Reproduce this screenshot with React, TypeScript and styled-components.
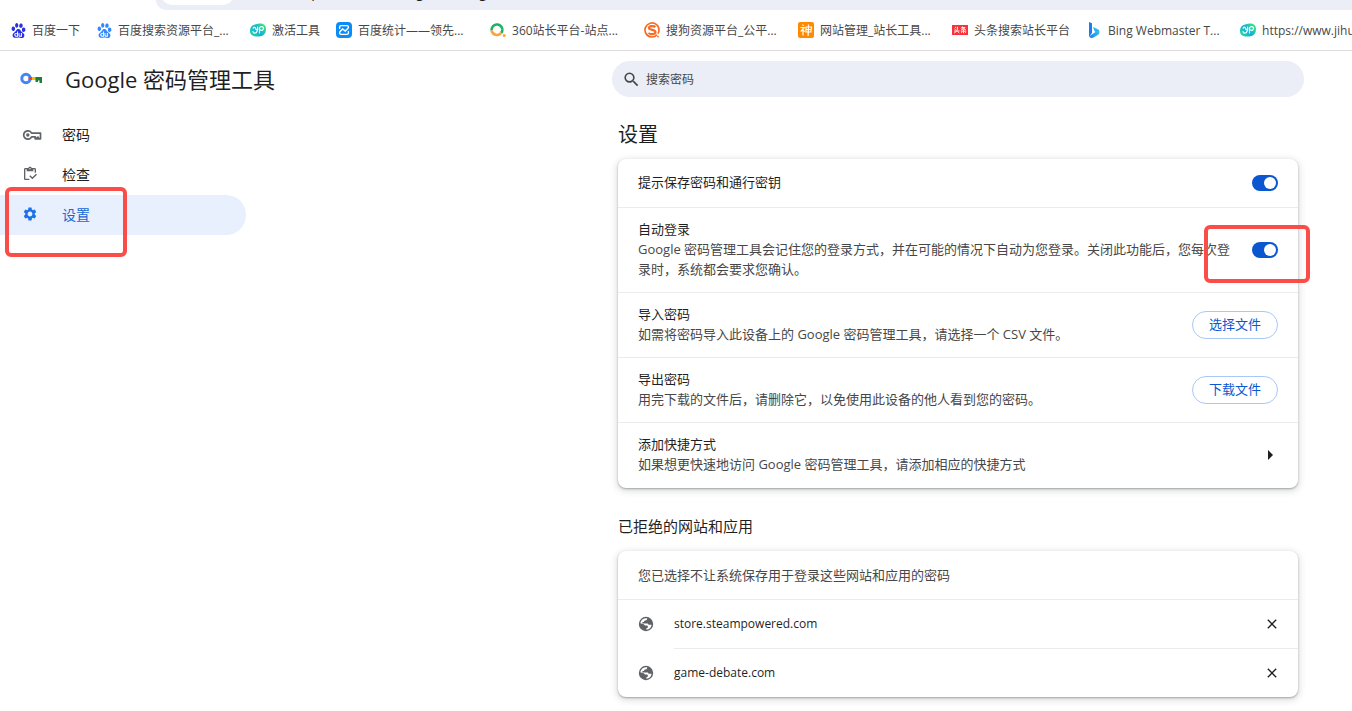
import React from "react";
import styled, { createGlobalStyle, css } from "styled-components";
import { SiBaidu } from "react-icons/si";
import { MdSearch, MdSettings, MdOutlineInventory, MdClose, MdArrowRight } from "react-icons/md";

const GlobalStyle = createGlobalStyle`
  *, *::before, *::after { box-sizing: border-box; }
  body {
    margin: 0;
    background: #fff;
    color: #1f1f1f;
    font-family: "Open Sans", "Noto Sans CJK SC", sans-serif;
    font-size: 13px;
    line-height: 20px;
  }
  button, input { font: inherit; }
  h1, h2, p, ul { margin: 0; padding: 0; }
  ul { list-style: none; }
  svg { display: block; flex: none; }
`;

const Page = styled.div`
  min-height: 100vh;
  overflow-x: hidden;
`;

const AddressStrip = styled.div`
  display: flex;
  align-items: flex-end;
  height: 10px;
  margin-left: 156px;
  padding: 0 0 5px 4px;
  overflow: hidden;
  background: #ebeef7;
  border-bottom-left-radius: 14px;
`;

const SiteChip = styled.button`
  flex: none;
  width: 75px;
  height: 26px;
  border: 0;
  border-radius: 13px;
  background: #fff;
`;

const AddressInput = styled.input`
  flex: 1;
  min-width: 0;
  height: 20px;
  margin-bottom: 3px;
  padding: 0 0 0 12px;
  border: 0;
  background: transparent;
  color: #1f1f1f;
  font-size: 14px;
  line-height: 20px;
`;

const BookmarkBar = styled.nav`
  display: flex;
  align-items: center;
  gap: 16px;
  height: 41px;
  padding-left: 10px;
  border-bottom: 1px solid #dcdcdc;
  overflow: hidden;
`;

const Bookmark = styled.a<{ $truncated?: boolean }>`
  display: flex;
  flex: none;
  align-items: center;
  gap: 6px;
  width: ${(p) => (p.$truncated ? "138px" : "auto")};
  color: #474747;
  font-size: 12px;
  text-decoration: none;
  white-space: nowrap;
`;

const BookmarkLabel = styled.span`
  padding-top: 2px;
`;

const Layout = styled.div`
  display: grid;
  grid-template-columns: minmax(246px, 564px) minmax(728px, 1fr);
`;

const Brand = styled.div`
  display: flex;
  align-items: center;
  gap: 22px;
  height: 56px;
  padding-left: 20px;
`;

const BrandTitle = styled.h1`
  font-size: 22px;
  font-weight: 400;
  line-height: 28px;
`;

const Menu = styled.ul`
  width: 246px;
  padding-top: 8px;
`;

const MenuItem = styled.li`
  position: relative;
`;

const MenuLink = styled.a<{ $active?: boolean }>`
  display: flex;
  align-items: center;
  height: 40px;
  padding-left: 22px;
  border-radius: 0 20px 20px 0;
  color: #1f1f1f;
  font-size: 14px;
  text-decoration: none;
  svg { color: #5f6368; }
  ${(p) =>
    p.$active &&
    css`
      background: #e8f0fe;
      color: #1967d2;
      svg { color: #1a73e8; }
    `}
`;

const MenuIcon = styled.span`
  width: 40px;
  padding-bottom: 2px;
`;

const Highlight = styled.span`
  position: absolute;
  z-index: 2;
  border: 4px solid #fa4d49;
  border-radius: 6px;
  pointer-events: none;
`;

const MenuHighlight = styled(Highlight)`
  top: -8px;
  left: 5px;
  width: 122px;
  height: 70px;
`;

const ToggleHighlight = styled(Highlight)`
  top: -17px;
  left: -48px;
  width: 106px;
  height: 58px;
`;

const Main = styled.main`
  padding: 10px 24px 14px;
`;

const SearchBox = styled.label`
  display: flex;
  align-items: center;
  gap: 5px;
  max-width: 692px;
  height: 36px;
  margin: 0 auto;
  padding: 0 10px;
  border-radius: 18px;
  background: #ebeef7;
  color: #474747;
`;

const SearchInput = styled.input`
  flex: 1;
  min-width: 0;
  padding: 2px 0 0;
  border: 0;
  outline: 0;
  background: transparent;
  color: #474747;
  font-size: 12px;
  &::placeholder { color: #474747; opacity: 1; }
`;

const Content = styled.div`
  max-width: 680px;
  margin: 0 auto;
`;

const PageHeading = styled.h2`
  padding: 24px 0 10px;
  font-size: 20px;
  font-weight: 400;
  line-height: 28px;
`;

const SectionHeading = styled.h2`
  padding: 28px 0 15px;
  font-size: 15px;
  font-weight: 400;
  line-height: 20px;
`;

const Card = styled.section`
  border-radius: 8px;
  background: #fff;
  box-shadow: 0 1px 2px rgba(60, 64, 67, 0.4), 0 2px 6px 2px rgba(60, 64, 67, 0.15);
`;

const Row = styled.div`
  display: flex;
  align-items: center;
  gap: 20px;
  min-height: 48px;
  padding: 11px 20px;
  & + & { border-top: 1px solid #ececec; }
  & + &:last-child { padding-bottom: 12px; }
`;

const RowText = styled.div`
  flex: 1;
  min-width: 0;
  padding-bottom: 2px;
`;

const Note = styled.p`
  color: #474747;
`;

const ToggleWrap = styled.span`
  position: relative;
  display: flex;
`;

const Toggle = styled.input`
  appearance: none;
  display: flex;
  align-items: center;
  width: 26px;
  height: 16px;
  margin: 0;
  padding: 2px;
  border-radius: 8px;
  background: #0b57d0;
  &::before {
    content: "";
    width: 12px;
    height: 12px;
    margin-left: auto;
    border-radius: 50%;
    background: #fff;
  }
  &:not(:checked) { background: #747775; }
  &:not(:checked)::before { margin-left: 0; }
`;

const PillButton = styled.button`
  width: 86px;
  height: 28px;
  padding: 0 0 2px;
  border: 1px solid #a8c7fa;
  border-radius: 14px;
  background: #fff;
  color: #0b57d0;
  line-height: 20px;
`;

const IconButton = styled.button`
  display: flex;
  align-items: center;
  justify-content: center;
  width: 16px;
  height: 24px;
  padding: 0;
  border: 0;
  background: none;
  color: #1f1f1f;
`;

const SiteList = styled.ul`
  border-top: 1px solid #ececec;
`;

const SiteItem = styled.li`
  display: flex;
  align-items: center;
  gap: 20px;
  padding-left: 20px;
  font-size: 12px;
`;

const SiteBody = styled.div`
  display: flex;
  flex: 1;
  align-items: center;
  justify-content: space-between;
  height: 48px;
  padding-right: 18px;
  ${SiteItem} + ${SiteItem} & {
    height: 49px;
    border-top: 1px solid #ececec;
  }
`;

const JihuoIcon = () => (
  <svg width="16" height="16" viewBox="0 0 16 16">
    <defs>
      <linearGradient id="jihuo" x1="0" y1="0.9" x2="1" y2="0.2">
        <stop offset="0" stopColor="#20dc98" />
        <stop offset="0.5" stopColor="#14b0dc" />
        <stop offset="1" stopColor="#3cec6c" />
      </linearGradient>
    </defs>
    <path d="M5 2.500C10 0.500 16 1 16 7s-3.500 7.500-9 7.500S0 12 0 8.500s2-5 5-6z" fill="url(#jihuo)" />
    <path d="M3.200 6.200c0-1.500 2-1.500 2.200 0S7 8.200 7.600 6.800V5M3 9.500c0 2.200 3.400 2.200 4 0L7.800 7M9.500 11V6.500c0-2.500 4-2.500 4 0 0 1.600-1.800 2.200-3 1.500" fill="none" stroke="#fff" strokeWidth="1.200" strokeLinecap="round" />
  </svg>
);

const TongjiIcon = () => (
  <svg width="16" height="16" viewBox="0 0 16 16">
    <rect width="16" height="16" rx="4" fill="#0b8cf5" />
    <path d="M3.600 7V5q0-1.400 1.400-1.400h6q1.400 0 1.400 1.400v1M12.400 9v2q0 1.400-1.400 1.400H5Q3.600 12.400 3.600 11v-1" fill="none" stroke="#fff" strokeWidth="1.300" />
    <path d="M3.600 10l3-3 2.600 2 3.200-3" fill="none" stroke="#fff" strokeWidth="1.500" />
  </svg>
);

const So360Icon = () => (
  <svg width="16" height="16" viewBox="0 0 16 16" fill="none" strokeWidth="2.600">
    <path d="M1.600 8.500a5.400 5.400 0 0 1 10.800-1.200" stroke="#19b366" />
    <path d="M12.400 7.300a5.400 5.400 0 0 1-1.200 3.600" stroke="#19b366" />
    <path d="M1.600 8.500A5.400 5.400 0 0 0 11.200 10.900" stroke="#fba33c" />
    <circle cx="14.200" cy="13.600" r="1.500" fill="#fba33c" />
  </svg>
);

const SogouIcon = () => (
  <svg width="16" height="16" viewBox="0 0 16 16" fill="none" stroke="#fb6a22">
    <path d="M13 12.900A7 7 0 1 1 15 8c0 1.500-.4 2.700-1 3.600" strokeWidth="1.700" />
    <path d="M11.500 5C9.500 3.600 5 3.800 5 6s6.500 1.500 6.500 4-5 2.700-7 1" strokeWidth="2.200" />
    <circle cx="14" cy="14.600" r="0.900" fill="#fb6a22" stroke="none" />
  </svg>
);

const ShenIcon = () => (
  <svg width="16" height="16" viewBox="0 0 16 16">
    <rect width="16" height="16" rx="2" fill="#ff8a00" />
    <g fill="none" stroke="#fff" strokeWidth="1.200">
      <path d="M4.500 2.500l1 1.300M2.500 5.500h3.800L2.700 9.500M5 7.500v6M5.500 8.500l1.200 1.200" />
      <path d="M8 5h5.500l-.6 5H8zM8 7.500h5M10.500 2.500l-.4 11.500" />
    </g>
  </svg>
);

const ToutiaoIcon = () => (
  <svg width="16" height="16" viewBox="0 0 16 16">
    <rect y="3" width="16" height="10" fill="#f8313a" />
    <g fill="none" stroke="#fff" strokeWidth="0.900">
      <path d="M3 5l1.200.8M2.500 6.800l1.200.8M2 9h5.500M5.500 4.800c0 3-.5 5-3.300 6.200M5.500 9.500l1.800 1.500" />
      <path d="M10.500 4.500l-1.500 2M10 5.500h3c-1 1.500-2 2-4 2.500M10 6l4 2M8.800 9.200h5.400M11.500 8v3.300M10.300 9.800l-1.200 1M12.700 9.800l1.200 1" />
    </g>
  </svg>
);

const BingIcon = () => (
  <svg width="16" height="16" viewBox="0 0 16 16">
    <defs>
      <linearGradient id="bing" x1="1" y1="0.2" x2="0" y2="1">
        <stop offset="0" stopColor="#35c4f0" />
        <stop offset="0.6" stopColor="#2a9cf0" />
        <stop offset="1" stopColor="#1b7ff0" />
      </linearGradient>
    </defs>
    <path d="M3 0l3 1.200v9.600L3.500 14.600Q3 14 3 13z" fill="#1a7cf2" />
    <path d="M7 5l5 2.300q1.500.8 1.500 2.700c0 1.500-.7 2.300-1.700 3L7 15.700c-1.500.7-3.300 0-3.800-1.500L9.500 10 8.300 8.800z" fill="url(#bing)" />
  </svg>
);

const BrandKey = () => (
  <svg width="23" height="14" viewBox="0 0 23 14">
    <circle cx="6" cy="6.500" r="4.200" fill="none" stroke="#4285f4" strokeWidth="3" />
    <path d="M8.500 5H13v3H8.500z" fill="#ea4335" />
    <path d="M12 5h4v3h-4z" fill="#fbbc04" />
    <path d="M15.500 5H22v6h-2.500V8.500H18V10h-2.500z" fill="#188038" />
  </svg>
);

const KeyIcon = () => (
  <svg width="20" height="14" viewBox="0 0 20 14" fill="none" stroke="currentColor">
    <path d="M9.600 6.100A4.200 4.200 0 1 0 9.600 9.900h3.600v1.900h1.900v-1.500h1.200v1.500h2.200V6.100z" strokeWidth="1.700" strokeLinejoin="round" />
    <circle cx="5.800" cy="8" r="1.700" fill="currentColor" stroke="none" />
  </svg>
);

const GlobeIcon = () => (
  <svg width="16" height="16" viewBox="0 0 16 16">
    <circle cx="8" cy="8" r="7.200" fill="#5f6368" />
    <path d="M9.200 2.300c0 1.700-.6 2-2 2.200-.9.200-1.200.7-1.200 1.500H4.400v1.400h4.400c1.200 0 1.700.5 1.700 1.400h3.100a5.700 5.700 0 0 1-5.200 4.900v-1.500c1.200 0 1.500-.6 1.500-1.400 0-.8-.5-1.200-1.300-1.200H7L5.800 8.300 2.300 7.300a5.800 5.800 0 0 1 6.900-5z" fill="#fff" />
  </svg>
);

const bookmarks = [
  { label: "百度一下", icon: <SiBaidu size={15} color="#2932e1" /> },
  { label: "百度搜索资源平台_...", icon: <SiBaidu size={15} color="#3388ff" />, truncated: true },
  { label: "激活工具", icon: <JihuoIcon /> },
  { label: "百度统计——领先...", icon: <TongjiIcon />, truncated: true },
  { label: "360站长平台-站点...", icon: <So360Icon />, truncated: true },
  { label: "搜狗资源平台_公平...", icon: <SogouIcon />, truncated: true },
  { label: "网站管理_站长工具...", icon: <ShenIcon />, truncated: true },
  { label: "头条搜索站长平台", icon: <ToutiaoIcon /> },
  { label: "Bing Webmaster T...", icon: <BingIcon />, truncated: true },
  { label: "https://www.jihuo", icon: <JihuoIcon /> },
];

const BookmarkIcon = styled.span`
  display: flex;
  justify-content: center;
  width: 16px;
`;

const sites = ["store.steampowered.com", "game-debate.com"];

export default function App() {
  return (
    <Page>
      <GlobalStyle />
      <header>
        <AddressStrip>
          <SiteChip aria-label="Chrome" />
          <AddressInput aria-label="地址" defaultValue="chrome://password-manager/settings" />
        </AddressStrip>
        <BookmarkBar>
          {bookmarks.map((b) => (
            <Bookmark key={b.label} href="#" $truncated={b.truncated}>
              <BookmarkIcon>{b.icon}</BookmarkIcon>
              <BookmarkLabel>{b.label}</BookmarkLabel>
            </Bookmark>
          ))}
        </BookmarkBar>
      </header>
      <Layout>
        <aside>
          <Brand>
            <BrandKey />
            <BrandTitle>Google 密码管理工具</BrandTitle>
          </Brand>
          <Menu>
            <MenuItem>
              <MenuLink href="#passwords">
                <MenuIcon><KeyIcon /></MenuIcon>
                密码
              </MenuLink>
            </MenuItem>
            <MenuItem>
              <MenuLink href="#checkup">
                <MenuIcon><MdOutlineInventory size={16} /></MenuIcon>
                检查
              </MenuLink>
            </MenuItem>
            <MenuItem>
              <MenuLink href="#settings" $active>
                <MenuIcon><MdSettings size={16} /></MenuIcon>
                设置
              </MenuLink>
              <MenuHighlight />
            </MenuItem>
          </Menu>
        </aside>
        <Main>
          <SearchBox>
            <MdSearch size={19} />
            <SearchInput type="text" placeholder="搜索密码" aria-label="搜索密码" />
          </SearchBox>
          <Content>
            <PageHeading>设置</PageHeading>
            <Card>
              <Row>
                <RowText><label htmlFor="save-prompt">提示保存密码和通行密钥</label></RowText>
                <Toggle id="save-prompt" type="checkbox" defaultChecked />
              </Row>
              <Row>
                <RowText>
                  <label htmlFor="auto-signin">自动登录</label>
                  <Note>Google 密码管理工具会记住您的登录方式，并在可能的情况下自动为您登录。关闭此功能后，您每次登录时，系统都会要求您确认。</Note>
                </RowText>
                <ToggleWrap>
                  <Toggle id="auto-signin" type="checkbox" defaultChecked />
                  <ToggleHighlight />
                </ToggleWrap>
              </Row>
              <Row>
                <RowText>
                  <p>导入密码</p>
                  <Note>如需将密码导入此设备上的 Google 密码管理工具，请选择一个 CSV 文件。</Note>
                </RowText>
                <PillButton>选择文件</PillButton>
              </Row>
              <Row>
                <RowText>
                  <p>导出密码</p>
                  <Note>用完下载的文件后，请删除它，以免使用此设备的他人看到您的密码。</Note>
                </RowText>
                <PillButton>下载文件</PillButton>
              </Row>
              <Row>
                <RowText>
                  <p>添加快捷方式</p>
                  <Note>如果想更快速地访问 Google 密码管理工具，请添加相应的快捷方式</Note>
                </RowText>
                <IconButton aria-label="添加快捷方式"><MdArrowRight size={24} /></IconButton>
              </Row>
            </Card>
            <SectionHeading>已拒绝的网站和应用</SectionHeading>
            <Card>
              <Row>
                <Note>您已选择不让系统保存用于登录这些网站和应用的密码</Note>
              </Row>
              <SiteList>
                {sites.map((site) => (
                  <SiteItem key={site}>
                    <GlobeIcon />
                    <SiteBody>
                      {site}
                      <IconButton aria-label={`移除 ${site}`}><MdClose size={16} /></IconButton>
                    </SiteBody>
                  </SiteItem>
                ))}
              </SiteList>
            </Card>
          </Content>
        </Main>
      </Layout>
    </Page>
  );
}
